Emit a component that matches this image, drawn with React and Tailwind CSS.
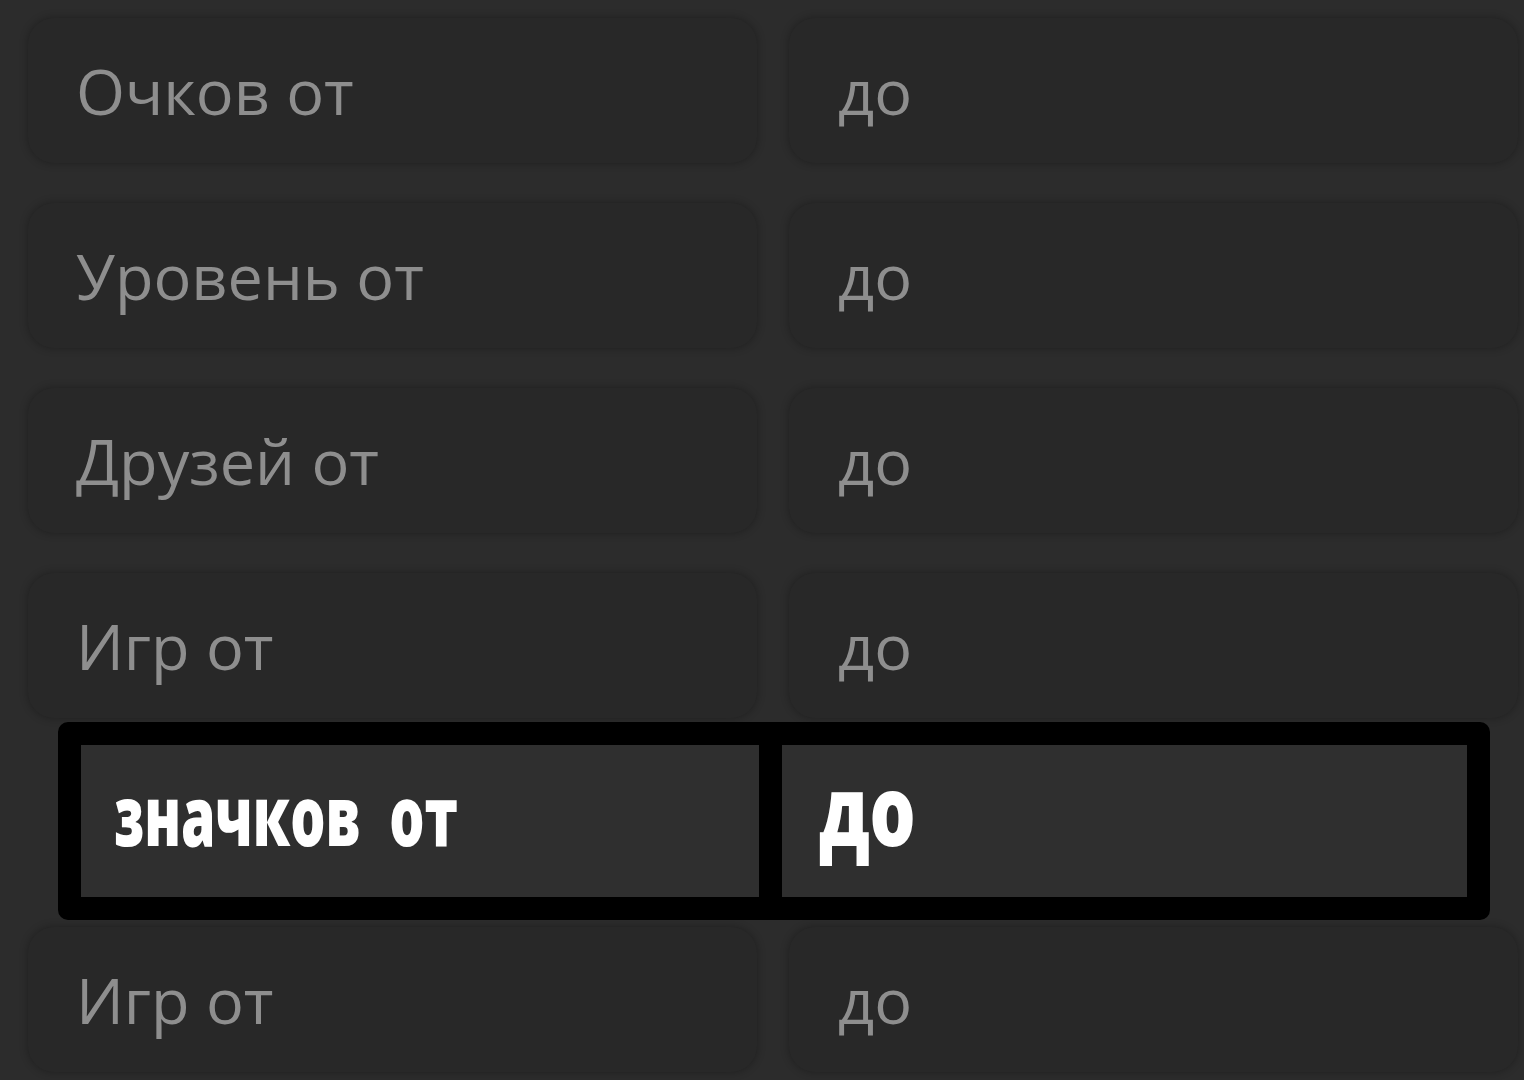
import React from 'react';

const rows = ['Очков от', 'Уровень от', 'Друзей от', 'Игр от'];

function FieldRow({ label }) {
  return (
    <div className="grid grid-cols-2 gap-[32px] pl-[28px] pr-[6px]">
      <div className="h-[145px] rounded-[26px] bg-[#282828] shadow-[0_0_8px_rgba(0,0,0,0.3)] flex items-center pl-[48px]">
        <span className="text-[63px] leading-none text-[#8e8e8e]">{label}</span>
      </div>
      <div className="h-[145px] rounded-[26px] bg-[#282828] shadow-[0_0_8px_rgba(0,0,0,0.3)] flex items-center pl-[49px]">
        <span className="text-[63px] leading-none text-[#8e8e8e]">до</span>
      </div>
    </div>
  );
}

export default function App() {
  return (
    <div
      className="w-[1524px] h-[1080px] overflow-hidden bg-[#2c2c2c] pt-[18px] flex flex-col"
      style={{ fontFamily: '"Open Sans", "Noto Sans", sans-serif' }}
    >
      <div className="flex flex-col gap-[40px]">
        {rows.map((r, i) => (
          <FieldRow key={i} label={r} />
        ))}
      </div>

      {/* hand-drawn highlight */}
      <div className="mt-[4px] ml-[58px] w-[1432px] h-[198px] border-[23px] border-black rounded-[10px] bg-[#2f2f2f] flex">
        <div className="w-[678px] flex items-center pl-[33px] pb-[14px]">
          <span className="inline-block origin-left scale-x-[0.66] text-[84px] font-extrabold leading-none text-white whitespace-nowrap">
            значков&nbsp; от
          </span>
        </div>
        <div className="w-[23px] bg-black" />
        <div className="flex-1 flex items-center pl-[37px] pb-[26px]">
          <span className="inline-block origin-left scale-x-[0.74] text-[98px] font-extrabold leading-none text-white">
            до
          </span>
        </div>
      </div>

      <div className="mt-[7px]">
        <FieldRow label="Игр от" />
      </div>
    </div>
  );
}
